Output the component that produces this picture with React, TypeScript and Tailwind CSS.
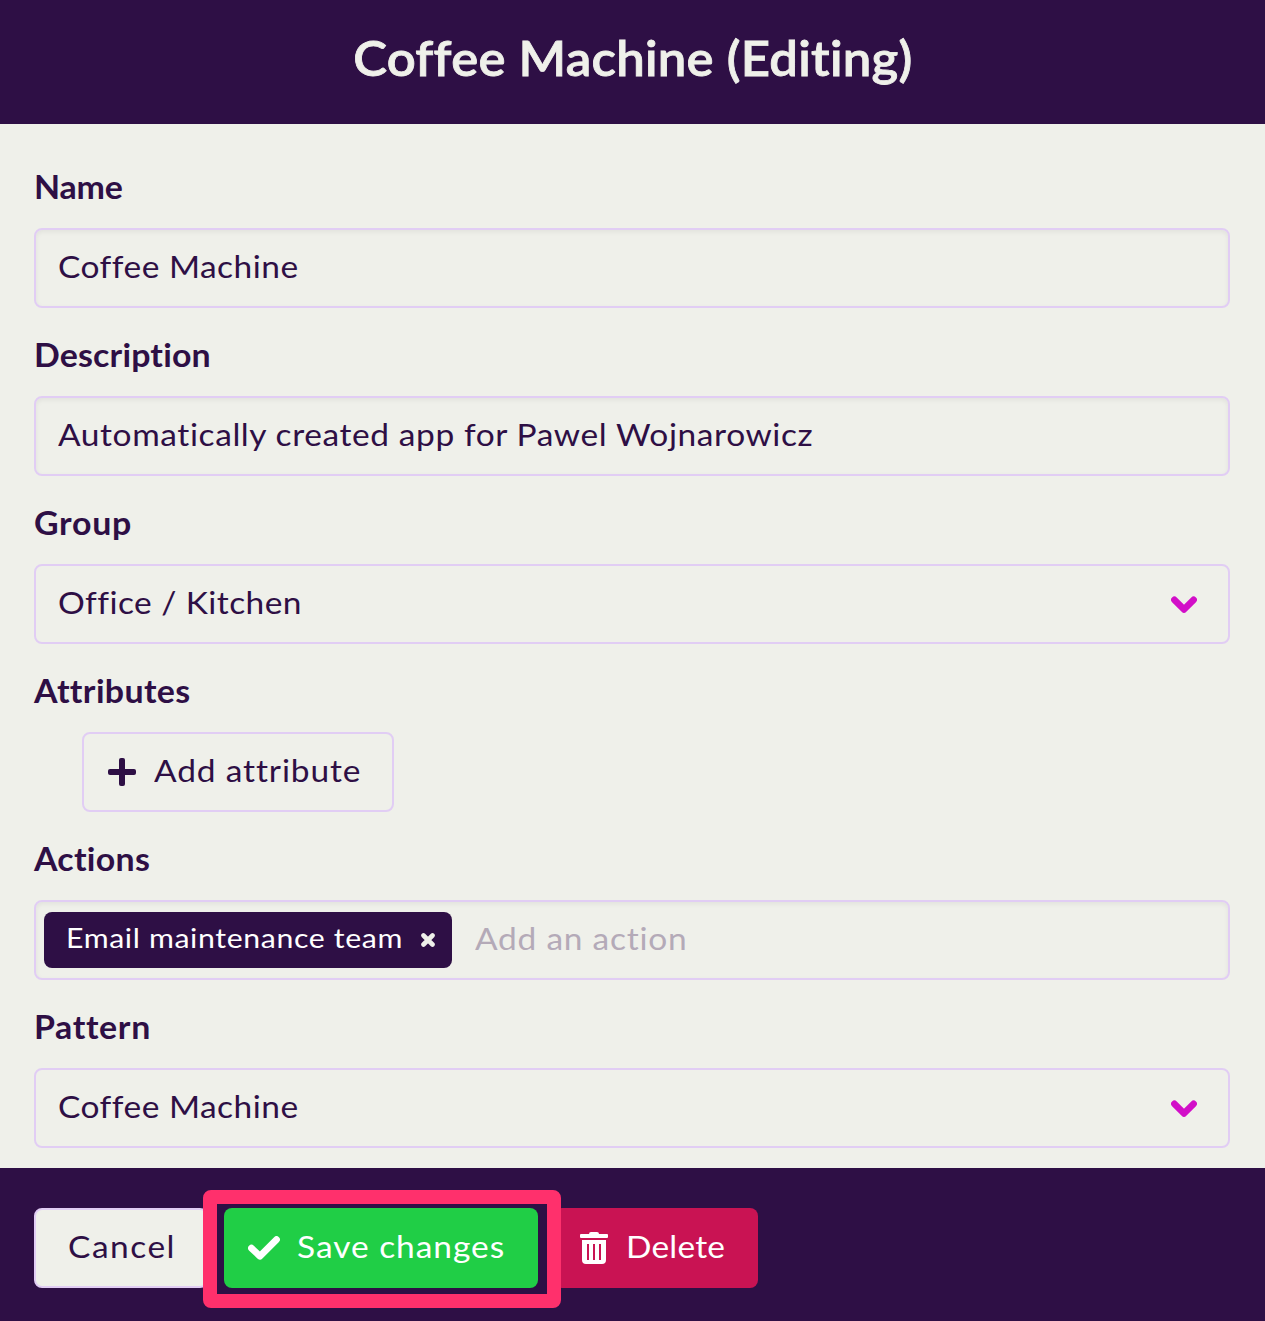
import type { ReactNode } from "react";

function ChevronIcon() {
  return (
    <svg width="26" height="17" viewBox="0 0 26 17" fill="none" aria-hidden="true">
      <path d="M3.4 3.8 13 13.4l9.6-9.6" stroke="#d20fc8" strokeWidth="6.6" strokeLinejoin="round" strokeLinecap="round" />
    </svg>
  );
}

function PlusIcon() {
  return (
    <svg width="28" height="28" viewBox="0 0 28 28" fill="#2e0f45" aria-hidden="true">
      <rect x="11" y="0" width="6" height="28" rx="2" />
      <rect x="0" y="11" width="28" height="6" rx="2" />
    </svg>
  );
}

function CheckIcon() {
  return (
    <svg width="32" height="24" viewBox="0 0 32 24" fill="none" aria-hidden="true">
      <path d="M3.5 12.2 12 20.2 28.5 3.6" stroke="#fff" strokeWidth="6.8" strokeLinejoin="round" strokeLinecap="round" />
    </svg>
  );
}

function TrashIcon() {
  return (
    <svg width="28" height="32" viewBox="0 0 28 32" fill="#fff" aria-hidden="true">
      <path d="M1 2h8q0-2 2-2h6q2 0 2 2h8q1 0 1 1v2q0 1-1 1H1q-1 0-1-1V3q0-1 1-1Z" />
      <path
        fillRule="evenodd"
        d="M2 8h24v20q0 4-4 4H6q-4 0-4-4ZM7 12v16h2V12Zm6 0v16h2V12Zm6 0v16h2V12Z"
      />
    </svg>
  );
}

function CloseIcon() {
  return (
    <svg width="14" height="14" viewBox="0 0 14 14" fill="none" aria-hidden="true">
      <path d="M2.5 2.5l9 9M11.5 2.5l-9 9" stroke="#eff0ea" strokeWidth="4.6" strokeLinecap="round" />
    </svg>
  );
}

function Field({ label, tracking, children }: { label: string; tracking: string; children: ReactNode }) {
  return (
    <div>
      <div className="flex h-20 items-center pb-0.5 text-[32px] font-bold">
        <span className={`inline-block origin-left scale-x-[1.06] ${tracking}`}>{label}</span>
      </div>
      {children}
    </div>
  );
}

function Wide({ className, children }: { className: string; children: ReactNode }) {
  return <span className={`inline-block origin-left scale-x-[1.08] pb-1 ${className}`}>{children}</span>;
}

const box = "flex h-20 items-center rounded-lg border-2 border-[#e1cdf4]";
const inset = "shadow-[inset_0_2px_5px_rgba(0,0,0,0.06)]";

export default function App() {
  return (
    <div className="flex h-[1321px] w-[1265px] flex-col overflow-hidden bg-[#eff0ea] font-['Lato',sans-serif] text-[31px] leading-10 whitespace-nowrap text-[#2e0f45]">
      <header className="flex h-[124px] shrink-0 justify-center bg-[#2e0f45] pt-[29px]">
        <h1 className="scale-x-[1.06] text-[48px] leading-[58px] font-semibold tracking-[0.22px] text-[#eff0ea] [-webkit-text-stroke:0.8px_#eff0ea]">
          Coffee Machine (Editing)
        </h1>
      </header>

      <main className="flex h-[1044px] shrink-0 flex-col gap-2 pt-6 pr-[35px] pl-[34px]">
        <Field label="Name" tracking="tracking-[-0.2px]">
          <div className={`${box} ${inset} pl-[22px]`}>
            <Wide className="tracking-[0.45px]">Coffee Machine</Wide>
          </div>
        </Field>
        <Field label="Description" tracking="tracking-[0.15px]">
          <div className={`${box} ${inset} pl-[22px]`}>
            <Wide className="tracking-[0.55px]">Automatically created app for Pawel Wojnarowicz</Wide>
          </div>
        </Field>
        <Field label="Group" tracking="tracking-[0.7px]">
          <div className={`${box} justify-between pr-[31px] pl-[22px]`}>
            <Wide className="tracking-[0.4px]">Office / Kitchen</Wide>
            <ChevronIcon />
          </div>
        </Field>
        <Field label="Attributes" tracking="tracking-[0.35px]">
          <div className={`${box} ml-12 w-[312px] pl-6`}>
            <PlusIcon />
            <Wide className="ml-[18px] tracking-[0.8px]">Add attribute</Wide>
          </div>
        </Field>
        <Field label="Actions" tracking="tracking-[0.25px]">
          <div className={`${box} ${inset} pl-2`}>
            <div className="flex h-14 w-[408px] items-center justify-between rounded-lg bg-[#2e0f45] pr-[17px] pl-[22px] text-white">
              <span className="-mt-1 inline-block origin-left scale-x-[1.12] text-[27px] tracking-[0.57px]">
                Email maintenance team
              </span>
              <CloseIcon />
            </div>
            <Wide className="ml-[23px] tracking-[0.7px] text-[#b4aab8]">Add an action</Wide>
          </div>
        </Field>
        <Field label="Pattern" tracking="tracking-[0.6px]">
          <div className={`${box} justify-between pr-[31px] pl-[22px]`}>
            <Wide className="tracking-[0.45px]">Coffee Machine</Wide>
            <ChevronIcon />
          </div>
        </Field>
      </main>

      <footer className="flex flex-1 items-start gap-4 bg-[#2e0f45] pt-10 pl-[34px]">
        <button className={`${box} w-[174px] bg-[#eff0ea] pl-8`}>
          <Wide className="tracking-[1.4px]">Cancel</Wide>
        </button>
        <div className="relative">
          <button className="flex h-20 w-[314px] items-center rounded-lg bg-[#20ce46] pl-6 text-white">
            <CheckIcon />
            <Wide className="ml-[17px] tracking-[0.9px]">Save changes</Wide>
          </button>
          <div className="absolute -top-[18px] -left-[21px] z-10 h-[118px] w-[358px] rounded-lg border-14 border-[#ff306c]" />
        </div>
        <button className="flex h-20 w-[204px] items-center rounded-lg bg-[#c91353] pl-[26px] text-white">
          <TrashIcon />
          <Wide className="ml-[18px] tracking-[0.2px]">Delete</Wide>
        </button>
      </footer>
    </div>
  );
}
